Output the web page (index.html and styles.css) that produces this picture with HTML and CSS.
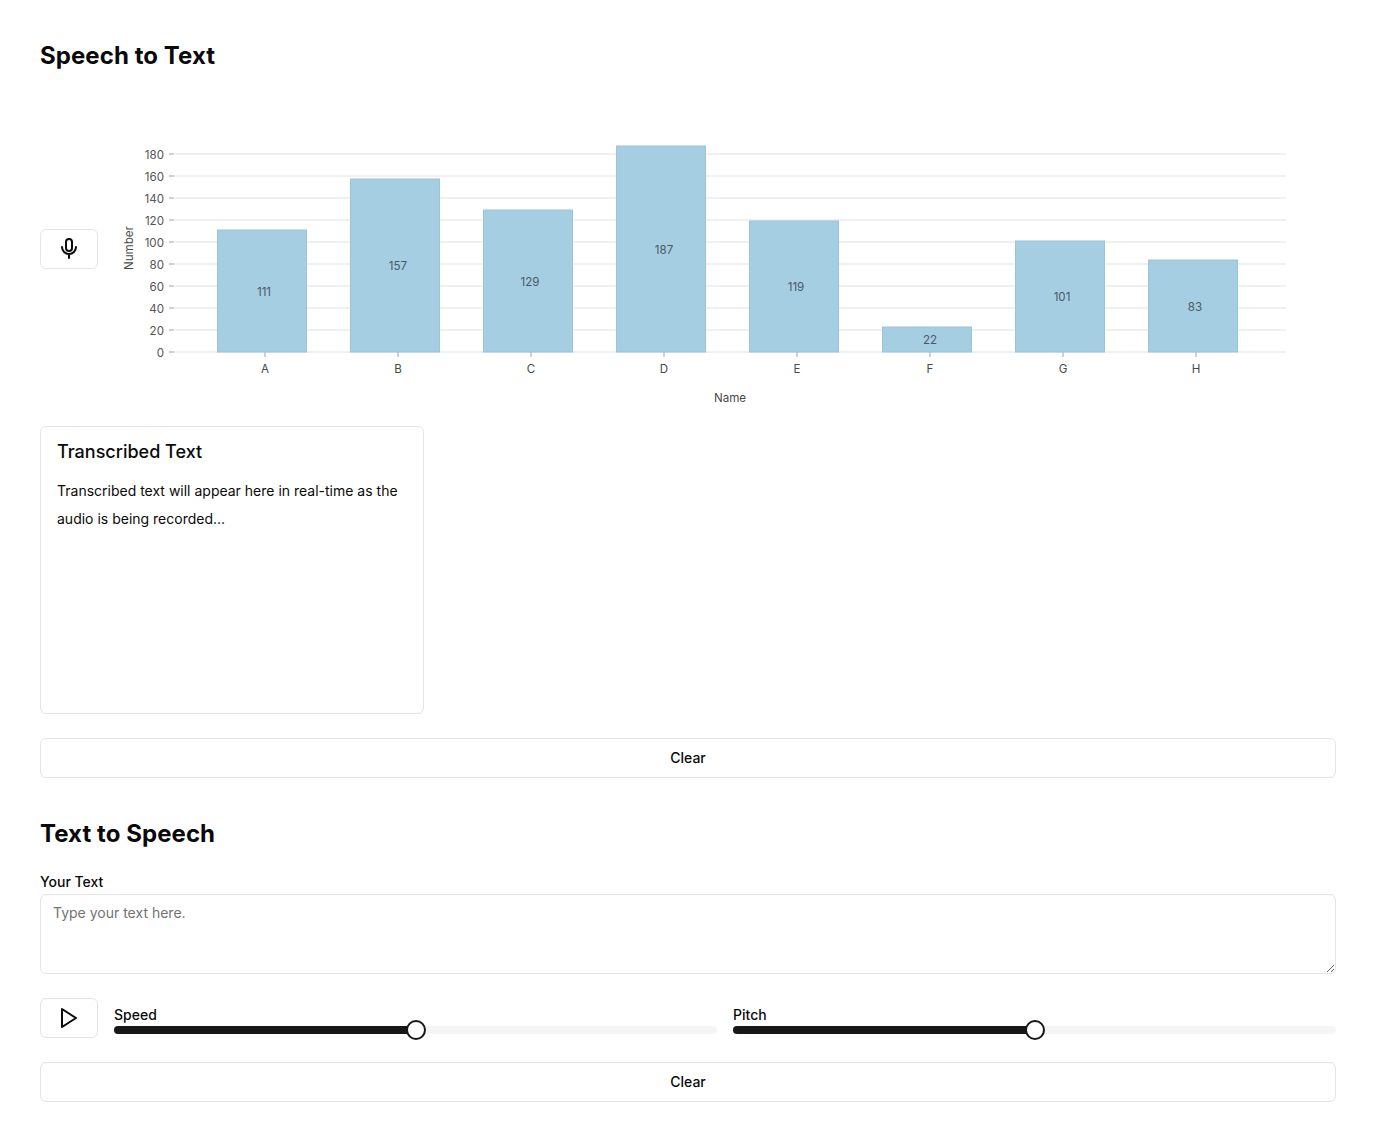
FILE: index.html
```html
<!DOCTYPE html>
<html lang="en">
<head>
    <meta charset="UTF-8">
    <title>Speech to Text</title>
    <link rel="stylesheet" href="styles.css">
</head>
<body>
    <h1 class="title">Speech to Text</h1>

    <div class="record-row">
        <button class="btn icon-btn" type="button" aria-label="Record">
            <svg width="24" height="24" viewBox="0 0 24 24" fill="none" stroke="currentColor" stroke-width="2" stroke-linecap="round" stroke-linejoin="round">
                <rect x="9" y="2" width="6" height="12" rx="3"/>
                <path d="M5 10a7 7 0 0 0 14 0"/>
                <path d="M12 17v4"/>
            </svg>
        </button>
        <svg class="chart" viewBox="114 80 1222 338" width="1222" height="338">
            <g class="grid">
                <path d="M174 352H1286M174 330H1286M174 308H1286M174 286H1286M174 264H1286M174 242H1286M174 220H1286M174 198H1286M174 176H1286M174 154H1286"/>
            </g>
            <g class="ticks">
                <path d="M169 352H174M169 330H174M169 308H174M169 286H174M169 264H174M169 242H174M169 220H174M169 198H174M169 176H174M169 154H174"/>
                <path d="M265 352V357M398 352V357M531 352V357M664 352V357M797 352V357M930 352V357M1063 352V357M1196 352V357"/>
            </g>
            <g class="bars">
                <rect x="217.5" y="230" width="89" height="122"/>
                <rect x="350.5" y="179" width="89" height="173"/>
                <rect x="483.5" y="210" width="89" height="142"/>
                <rect x="616.5" y="146" width="89" height="206"/>
                <rect x="749.5" y="221" width="89" height="131"/>
                <rect x="882.5" y="327" width="89" height="25"/>
                <rect x="1015.5" y="241" width="89" height="111"/>
                <rect x="1148.5" y="260" width="89" height="92"/>
            </g>
            <g class="axis-y">
                <text x="164" y="357">0</text>
                <text x="164" y="335">20</text>
                <text x="164" y="313">40</text>
                <text x="164" y="291">60</text>
                <text x="164" y="269">80</text>
                <text x="164" y="247">100</text>
                <text x="164" y="225">120</text>
                <text x="164" y="203">140</text>
                <text x="164" y="181">160</text>
                <text x="164" y="159">180</text>
            </g>
            <g class="axis-x">
                <text x="265" y="373">A</text>
                <text x="398" y="373">B</text>
                <text x="531" y="373">C</text>
                <text x="664" y="373">D</text>
                <text x="797" y="373">E</text>
                <text x="930" y="373">F</text>
                <text x="1063" y="373">G</text>
                <text x="1196" y="373">H</text>
                <text x="730" y="402">Name</text>
                <text x="0" y="0" transform="translate(133 248) rotate(-90)">Number</text>
            </g>
            <g class="values">
                <text x="264" y="296">111</text>
                <text x="398" y="270">157</text>
                <text x="530" y="286">129</text>
                <text x="664" y="254">187</text>
                <text x="796" y="291">119</text>
                <text x="930" y="344">22</text>
                <text x="1062" y="301">101</text>
                <text x="1195" y="311">83</text>
            </g>
        </svg>
    </div>

    <div class="card">
        <h3 class="card-title">Transcribed Text</h3>
        <p class="card-text">Transcribed text will appear here in real-time as the audio is being recorded...</p>
    </div>

    <button class="btn clear-btn" type="button">Clear</button>

    <h1 class="title title-tts">Text to Speech</h1>

    <label class="field-label" for="tts">Your Text</label>
    <textarea class="text-input" id="tts" placeholder="Type your text here."></textarea>

    <div class="controls">
        <button class="btn icon-btn" type="button" aria-label="Play">
            <svg width="24" height="24" viewBox="0 0 24 24" fill="none" stroke="currentColor" stroke-width="2" stroke-linecap="round" stroke-linejoin="round">
                <polygon points="5 3 19 12 5 21 5 3"/>
            </svg>
        </button>
        <div class="slider-group">
            <div class="slider-label">Speed</div>
            <div class="slider"><div class="slider-fill" style="width: 50%"></div><span class="slider-thumb" style="left: 50%"></span></div>
        </div>
        <div class="slider-group">
            <div class="slider-label">Pitch</div>
            <div class="slider"><div class="slider-fill" style="width: 50%"></div><span class="slider-thumb" style="left: 50%"></span></div>
        </div>
    </div>

    <button class="btn clear-btn" type="button">Clear</button>
</body>
</html>
```

FILE: styles.css
```css
* {
    box-sizing: border-box;
}
body {
    font-family: 'Inter', sans-serif;
    background-color: #fff;
    color: #0a0a0a;
    margin: 0;
    padding: 40px;
}
.title {
    font-size: 24px;
    line-height: 32px;
    font-weight: 700;
    letter-spacing: 0.07px;
    margin: 0;
}
.title-tts {
    margin-top: 40px;
}
.btn {
    display: flex;
    align-items: center;
    justify-content: center;
    height: 40px;
    padding: 0;
    background-color: #fff;
    color: #0a0a0a;
    border: 1px solid #e5e5e5;
    border-radius: 6px;
    font-family: inherit;
    font-size: 14px;
    font-weight: 500;
    cursor: pointer;
}
.icon-btn {
    width: 58px;
    flex-shrink: 0;
}
.clear-btn {
    width: 100%;
    margin-top: 24px;
    padding-bottom: 2px;
}
.record-row {
    display: flex;
    align-items: center;
    gap: 16px;
    margin-top: 8px;
    margin-bottom: 8px;
}
.chart {
    display: block;
    font-family: 'Inter', sans-serif;
    font-size: 11.6px;
}
.grid path {
    fill: none;
    stroke: #f0f0f0;
    stroke-width: 2;
}
.ticks path {
    fill: none;
    stroke: #a3a3a3;
    stroke-width: 1;
}
.bars rect {
    fill: #a6cee3;
    stroke: #9cc4d9;
    stroke-width: 1;
}
.axis-y text {
    text-anchor: end;
    fill: #555;
}
.axis-x text {
    text-anchor: middle;
    fill: #4a4a4a;
}
.values text {
    text-anchor: middle;
    fill: #4a5a65;
}
.card {
    width: 384px;
    height: 288px;
    border: 1px solid #e5e5e5;
    border-radius: 6px;
    padding: 12px 16px;
}
.card-title {
    font-size: 18px;
    line-height: 26px;
    font-weight: 500;
    margin: 0;
}
.card-text {
    font-size: 14px;
    line-height: 28px;
    margin: 12px 0 0;
}
.field-label {
    display: block;
    font-size: 14px;
    line-height: 20px;
    font-weight: 500;
    margin-top: 22px;
    margin-bottom: 2px;
}
.text-input {
    display: block;
    width: 100%;
    height: 80px;
    padding: 8px 12px;
    border: 1px solid #e5e5e5;
    border-radius: 6px;
    font-family: inherit;
    font-size: 14px;
    line-height: 20px;
    color: #0a0a0a;
    outline: none;
}
.text-input::placeholder {
    color: #737373;
}
.controls {
    display: flex;
    align-items: center;
    gap: 16px;
    margin-top: 24px;
}
.slider-group {
    flex: 1;
    padding-top: 4px;
}
.slider-label {
    font-size: 14px;
    line-height: 16px;
    font-weight: 500;
    margin-bottom: 3px;
}
.slider {
    position: relative;
    height: 8px;
    border-radius: 4px;
    background-color: #f5f5f5;
}
.slider-fill {
    height: 100%;
    border-radius: 4px;
    background-color: #171717;
}
.slider-thumb {
    position: absolute;
    top: -6px;
    width: 20px;
    height: 20px;
    margin-left: -10px;
    border: 2px solid #171717;
    border-radius: 50%;
    background-color: #fff;
}
```
